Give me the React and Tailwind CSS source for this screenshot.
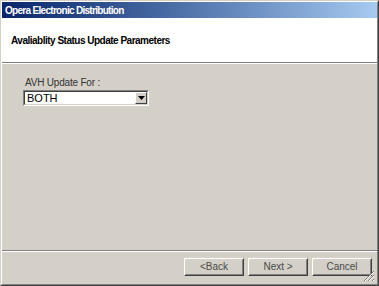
const font = { fontFamily: '"Liberation Sans", Arial, sans-serif' };

const WinButton = ({ children }) => (
  <button
    type="button"
    className="w-[60px] h-[18px] bg-[#d4d0c8] border border-t-white border-l-white border-r-[#404040] border-b-[#404040] text-[10px] text-[#4a4a4a] leading-none"
  >
    <span className="flex items-center justify-center w-full h-full border border-transparent border-r-[#808080] border-b-[#808080]">{children}</span>
  </button>
);

const Grip = () => (
  <svg className="absolute right-[2px] bottom-[2px]" width="12" height="12" viewBox="0 0 12 12">
    <path d="M11 1 L1 11 M11 5 L5 11 M11 9 L9 11" stroke="#808080" strokeWidth="1" />
    <path d="M11 2 L2 11 M11 6 L6 11 M11 10 L10 11" stroke="#ffffff" strokeWidth="1" />
  </svg>
);

export default function App() {
  return (
    <div style={font} className="w-[379px] h-[286px] bg-[#d4d0c8] border border-t-[#d4d0c8] border-l-[#d4d0c8] border-r-[#404040] border-b-[#404040]">
      <div className="relative flex flex-col h-full border border-t-white border-l-white border-r-[#808080] border-b-[#808080]">
        <div className="h-[16px] flex items-center pl-[3px] bg-gradient-to-r from-[#0a246a] to-[#a6caf0] text-white text-[10px] tracking-[-0.7px] font-bold">
          Opera Electronic Distribution
        </div>
        <div className="h-[44px] bg-white flex items-center pl-[9px] text-[10px] tracking-[-0.5px] font-bold text-black">
          Avaliablity Status Update Parameters
        </div>
        <div className="h-[2px] border-t border-t-[#808080] border-b border-b-white" />
        <div className="flex-1 px-[21px] pt-[13px]">
          <div className="text-[10px] tracking-[-0.2px] text-[#333] pl-[2px] leading-[12px]">AVH Update For :</div>
          <div className="mt-[1px] w-[126px] h-[16px] bg-white border border-t-[#808080] border-l-[#808080] border-r-white border-b-white">
            <div className="flex h-full border border-t-[#404040] border-l-[#404040] border-r-[#d4d0c8] border-b-[#d4d0c8]">
              <div className="flex-1 text-[11px] text-black leading-[12px] pl-[2px]">BOTH</div>
              <div className="w-[12px] h-full bg-[#d4d0c8] border border-t-white border-l-white border-r-[#404040] border-b-[#404040] flex items-center justify-center">
                <svg width="7" height="4" viewBox="0 0 7 4"><path d="M0 0 H7 L3.5 4 Z" fill="#000" /></svg>
              </div>
            </div>
          </div>
        </div>
        <div className="h-[2px] border-t border-t-[#808080] border-b border-b-white" />
        <div className="h-[32px] flex items-start justify-end gap-[4px] pt-[6px] pr-[5px]">
          <WinButton>&lt;Back</WinButton>
          <WinButton>Next &gt;</WinButton>
          <WinButton>Cancel</WinButton>
        </div>
        <Grip />
      </div>
    </div>
  );
}
